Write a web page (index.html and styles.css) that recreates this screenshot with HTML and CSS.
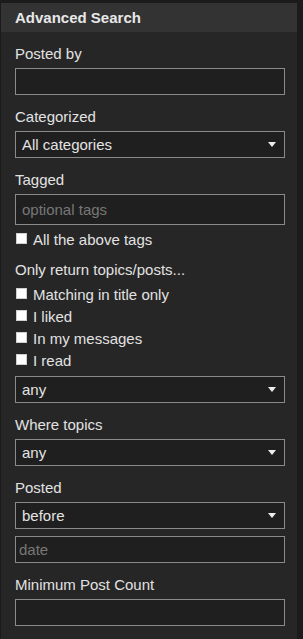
FILE: index.html
```html
<!DOCTYPE html>
<html>
<head>
<meta charset="utf-8">
<link rel="stylesheet" href="styles.css">
</head>
<body>
<div class="panel">
  <div class="panel-head">Advanced Search</div>
  <div class="panel-body">
    <div class="field">
      <label class="lbl">Posted by</label>
      <div class="box"></div>
    </div>
    <div class="field">
      <label class="lbl">Categorized</label>
      <div class="box select"><span>All categories</span><svg class="caret" width="8" height="5" viewBox="0 0 8 5"><path d="M0 0H8L4 5Z" fill="#eee"/></svg></div>
    </div>
    <div class="field field-tight">
      <label class="lbl">Tagged</label>
      <div class="box tall placeholder">optional tags</div>
      <div class="check"><span class="cb"></span>All the above tags</div>
    </div>
    <div class="field">
      <label class="lbl">Only return topics/posts...</label>
      <div class="check"><span class="cb"></span>Matching in title only</div>
      <div class="check"><span class="cb"></span>I liked</div>
      <div class="check"><span class="cb"></span>In my messages</div>
      <div class="check"><span class="cb"></span>I read</div>
      <div class="box select after-checks"><span>any</span><svg class="caret" width="8" height="5" viewBox="0 0 8 5"><path d="M0 0H8L4 5Z" fill="#eee"/></svg></div>
    </div>
    <div class="field">
      <label class="lbl">Where topics</label>
      <div class="box select"><span>any</span><svg class="caret" width="8" height="5" viewBox="0 0 8 5"><path d="M0 0H8L4 5Z" fill="#eee"/></svg></div>
    </div>
    <div class="field">
      <label class="lbl">Posted</label>
      <div class="box select"><span>before</span><svg class="caret" width="8" height="5" viewBox="0 0 8 5"><path d="M0 0H8L4 5Z" fill="#eee"/></svg></div>
      <div class="box placeholder date">date</div>
    </div>
    <div class="field">
      <label class="lbl">Minimum Post Count</label>
      <div class="box"></div>
    </div>
  </div>
</div>
</body>
</html>
```
FILE: styles.css
```css
html, body {
  margin: 0;
  padding: 0;
  background: #1b1b1b;
  height: 100%;
}
body {
  padding-top: 3px;
  box-sizing: border-box;
  font-family: "Liberation Sans", Arial, sans-serif;
  font-size: 15px;
  color: #e2e2e2;
}
.panel {
  width: 296px;
  margin-left: 1px;
  background: #262626;
  min-height: 636px;
}
.panel-head {
  height: 29px;
  line-height: 29px;
  padding-left: 14px;
  background: #333333;
  font-weight: bold;
  color: #e8e8e8;
}
.panel-body {
  padding: 12px 12px 0 14px;
}
.field {
  margin-bottom: 12px;
}
.field-tight {
  margin-bottom: 9px;
}
.lbl {
  display: block;
  line-height: 20px;
  margin-bottom: 4px;
}
.box {
  box-sizing: border-box;
  width: 270px;
  height: 27px;
  border: 1px solid #8a8a8a;
  background: #1f1f1f;
  padding: 0 6px;
  line-height: 25px;
  color: #e4e4e4;
}
.tall {
  height: 31px;
  line-height: 29px;
}
.placeholder {
  color: #777777;
}
.date {
  margin-top: 7px;
  padding-left: 3px;
}
.select {
  display: flex;
  align-items: center;
  justify-content: space-between;
  padding-right: 8px;
}
.caret {
  display: block;
}
.check {
  display: flex;
  align-items: center;
  line-height: 22px;
  height: 22px;
  padding-left: 1px;
}
.field .tall + .check {
  margin-top: 4px;
}
.cb {
  box-sizing: border-box;
  width: 11px;
  height: 11px;
  background: #ffffff;
  border: 1px solid #cfcfcf;
  margin-right: 6px;
  margin-top: -3px;
}
.after-checks {
  margin-top: 4px;
}
```
